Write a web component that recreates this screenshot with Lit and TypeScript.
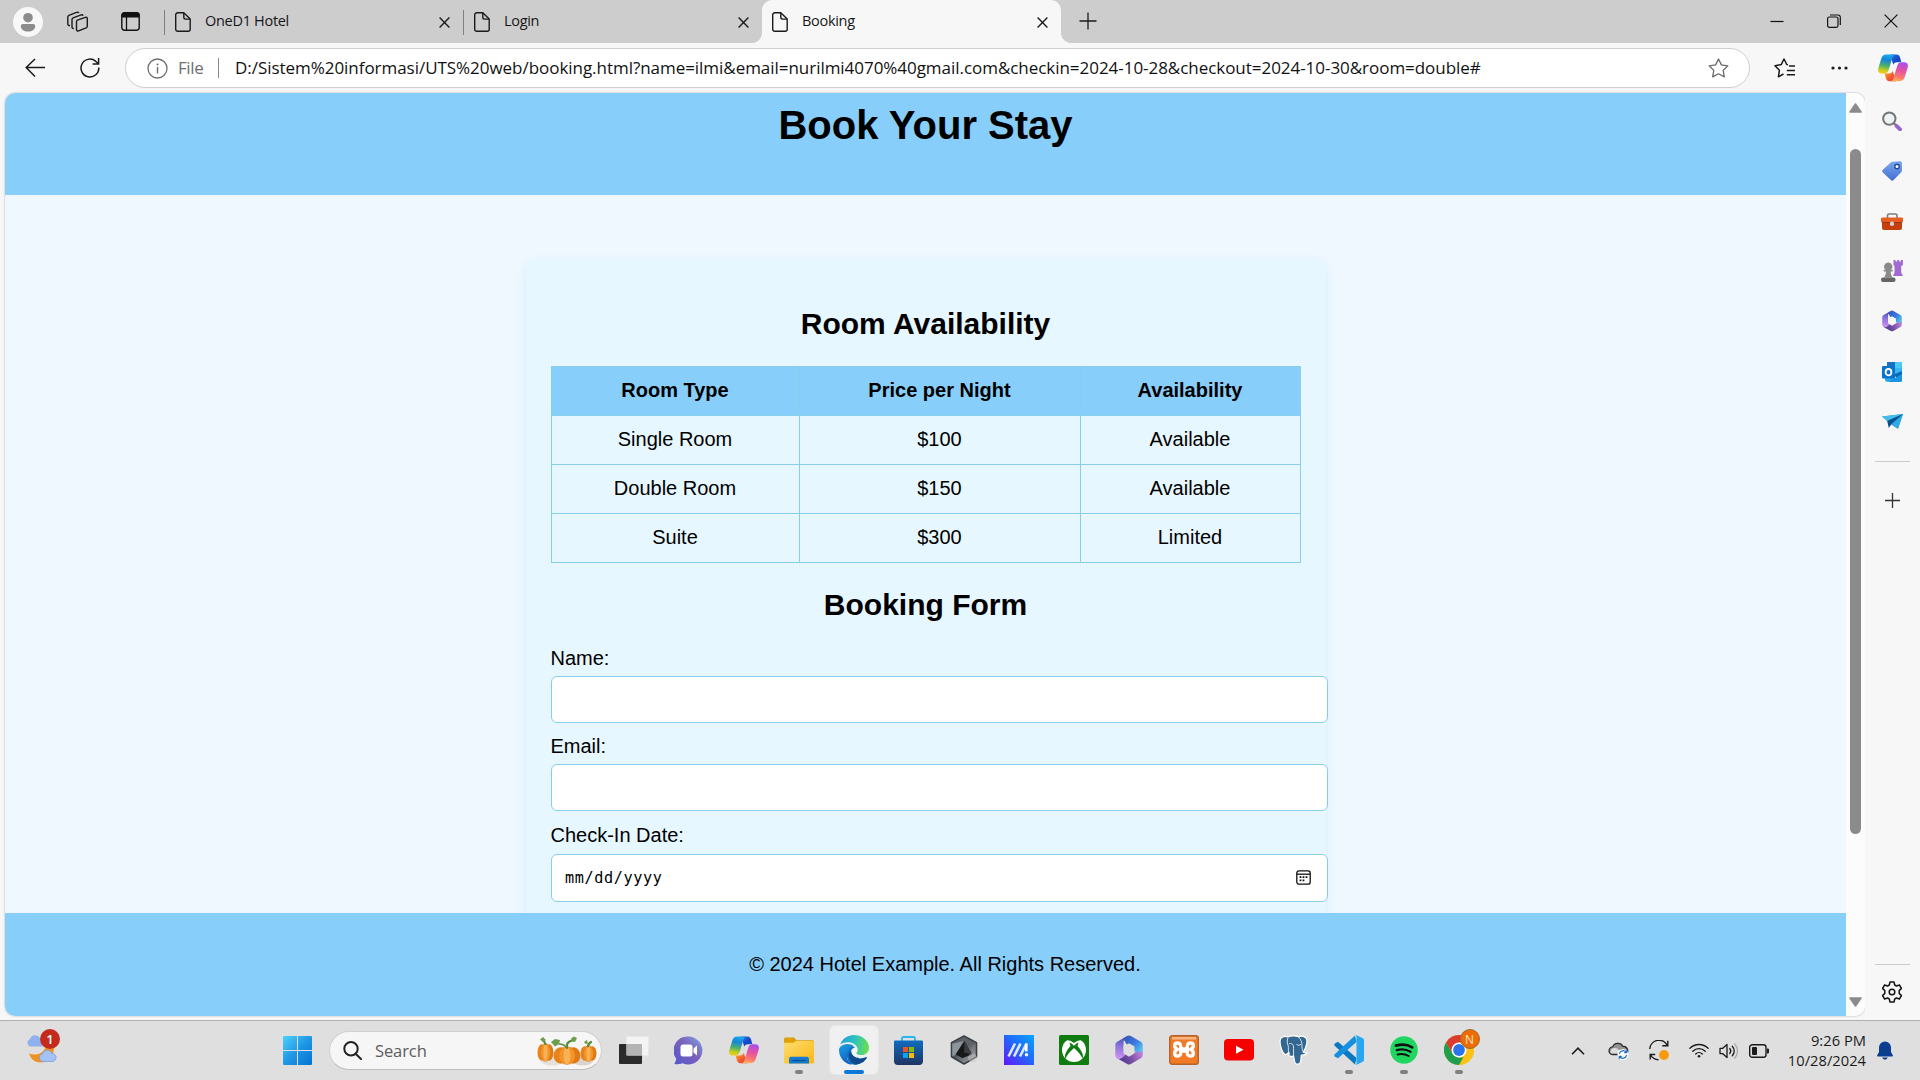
import { LitElement, html, svg, css } from "lit";
import { customElement } from "lit/decorators.js";

/* ---------- shared icon templates, drawn in device pixels ---------- */

const docIcon = html`<svg width="16" height="20" viewBox="0 0 16 20" fill="none" stroke="#1b1b1b" stroke-width="1.4" stroke-linejoin="round">
  <path d="M2.7.8h6.1l6.4 6.3v10.2a2 2 0 0 1-2 2H2.7a2 2 0 0 1-2-2V2.8a2 2 0 0 1 2-2z"/>
  <path d="M8.8 1v4.3a1.8 1.8 0 0 0 1.8 1.8h4.4"/></svg>`;

const closeIcon = html`<svg width="11" height="11" viewBox="0 0 11 11" stroke="#1b1b1b" stroke-width="1.4"><path d="M.6.6l9.8 9.8M10.4.6L.6 10.4"/></svg>`;

const copilotIcon = html`<svg width="30" height="28" viewBox="0 0 30 28">
  <defs>
    <linearGradient id="cpA" x1="0.5" y1="0" x2="0.35" y2="1"><stop offset="0" stop-color="#1aa8ee"/><stop offset=".3" stop-color="#1686d8"/><stop offset=".6" stop-color="#4db06d"/><stop offset=".85" stop-color="#c9cf1d"/><stop offset="1" stop-color="#f2c80f"/></linearGradient>
    <linearGradient id="cpB" x1="0.6" y1="0" x2="0.4" y2="1"><stop offset="0" stop-color="#a94ff0"/><stop offset=".45" stop-color="#e9529d"/><stop offset=".8" stop-color="#fb7a6d"/><stop offset="1" stop-color="#ffb05c"/></linearGradient>
    <linearGradient id="cpC" x1="0" y1="0" x2="1" y2="1"><stop offset="0" stop-color="#2a7be8"/><stop offset=".6" stop-color="#1544c4"/><stop offset="1" stop-color="#1b6ae0"/></linearGradient>
    <linearGradient id="cpD" x1="0" y1="0" x2="1" y2="1"><stop offset="0" stop-color="#fcae1c"/><stop offset=".6" stop-color="#f2562f"/><stop offset="1" stop-color="#d93a5c"/></linearGradient>
  </defs>
  <path fill="url(#cpC)" d="M12 .4h6.600c2.200 0 3 1.300 3.600 3.500l1.200 4.300h-4.600c-2 0-3 .8-3.500 2.600z"/>
  <path fill="url(#cpD)" d="M18 27.200h-6.600c-2.200 0-3-1.300-3.600-3.500L6.600 19.400h4.600c2 0 3-.8 3.500-2.600z"/>
  <path fill="url(#cpA)" d="M8.400.4h8.400c-1.400.6-2 1.900-2.500 3.700l-3.400 11.200c-.8 2.600-1.800 4.100-4.600 4.100H4C.6 19.400-.5 17.200.3 14.200L3.300 4.500C4.200 1.700 5.400.4 8.400.4z"/>
  <path fill="url(#cpB)" d="M21.600 27.200h-8.400c1.400-.6 2-1.900 2.500-3.700l3.400-11.200c.8-2.600 1.800-4.100 4.600-4.100H26c3.400 0 4.500 2.200 3.700 5.200l-3 9.700c-.9 2.800-2.100 4.100-5.100 4.100z"/>
</svg>`;

const m365 = (w: number, h: number) => html`<svg width=${w} height=${h} viewBox="0 0 28 30">
  <defs>
    <linearGradient id="mA" x1=".5" y1="0" x2=".4" y2="1"><stop offset="0" stop-color="#3a4cae"/><stop offset=".45" stop-color="#8a72d8"/><stop offset="1" stop-color="#cf92f2"/></linearGradient>
    <linearGradient id="mB" x1="0" y1="0" x2="1" y2=".9"><stop offset="0" stop-color="#3350b0"/><stop offset=".5" stop-color="#3b78de"/><stop offset="1" stop-color="#5cdcf8"/></linearGradient>
    <linearGradient id="mC" x1="0" y1=".6" x2="1" y2=".3"><stop offset="0" stop-color="#44388e"/><stop offset=".5" stop-color="#7a4fa4"/><stop offset="1" stop-color="#bf85dc"/></linearGradient>
    <mask id="mHole"><rect width="28" height="30" fill="#fff"/><path d="M14 9.200l4.800 2.800v5.800L14 20.800l-4.800-3V12z" fill="#000" stroke="#000" stroke-width="1.500" stroke-linejoin="round"/></mask>
  </defs>
  <g mask="url(#mHole)">
    <path fill="url(#mB)" d="M8 3.500L12.200 1c1.200-.7 2.400-.7 3.600 0l10 5.700c1.200.7 1.900 1.900 1.900 3.300v11L14 13z"/>
    <path fill="url(#mC)" d="M27.700 16v4c0 1.400-.7 2.600-1.900 3.300L15.800 29c-1.200.7-2.400.7-3.600 0l-10-5.700L14 15l5.500 2.500z"/>
    <path fill="url(#mA)" d="M13 .6L2.200 6.700A3.800 3.800 0 0 0 .3 10v10c0 1.700.9 2.900 2 3.400 1.600.8 3.200.6 4.700-.3l4.500-4L8.500 14V8c0-3 1.500-5.700 4.500-7.400z"/>
  </g>
</svg>`;

/* ---------- browser chrome ---------- */

@customElement("browser-tabs")
class BrowserTabs extends LitElement {
  static styles = css`
    :host { display: flex; height: 43px; background: #cdcdcd; font: 14.5px/20px "Open Sans", "Noto Sans", sans-serif; color: #161616; }
    svg { display: block; flex: none; }
    .lead { width: 164px; display: flex; align-items: center; box-sizing: border-box; padding-left: 13px; }
    .work { margin-left: 24px; }
    .pane { margin-left: 33px; }
    .tab { width: 299px; box-sizing: border-box; display: flex; align-items: center; padding: 1px 13px 0 10px; border-left: 1px solid transparent; height: 43px; }
    .rule { width: 1px; height: 25px; background: #808080; margin: 0 10px 0 -11px; }
    .name { flex: 1; margin-left: 14px; letter-spacing: -0.3px; margin-top: -2px; }
    .active { background: #f7f7f7; border-radius: 10px 10px 0 0; position: relative; padding-left: 9px; }
    .active::before, .active::after { content: ""; position: absolute; bottom: 0; width: 10px; height: 10px; }
    .active::before { left: -11px; background: radial-gradient(circle at 0 0, #cdcdcd 9.6px, #f7f7f7 10.2px); }
    .active::after { right: -10px; background: radial-gradient(circle at 100% 0, #cdcdcd 9.6px, #f7f7f7 10.2px); }
    .plus { margin: 12px 0 0 18px; }
    .window { margin-left: auto; display: flex; gap: 43px; padding: 14px 22px 0 0; }
  `;
  private tabs = [
    { name: "OneD1 Hotel", active: false },
    { name: "Login", active: false },
    { name: "Booking", active: true },
  ];
  render() {
    return html`
      <div class="lead">
        <svg width="30" height="30" viewBox="0 0 30 30"><circle cx="15" cy="15" r="15" fill="#f8f8f8"/><circle cx="15" cy="10.700" r="4.800" fill="#8c8c8c"/><path fill="#8c8c8c" d="M10 17h10a2.200 2.200 0 0 1 2.200 2.200c0 3-3 5.300-7.200 5.300s-7.200-2.300-7.200-5.300A2.200 2.200 0 0 1 10 17z"/></svg>
        <svg class="work" width="21" height="21" viewBox="0 0 21 21" fill="none" stroke="#1b1b1b" stroke-width="1.400" stroke-linejoin="round"><path d="M10.400 9.200l8-2.900c1-.3 1.900.2 1.900 1.300v7.700c0 .7-.4 1.300-1.100 1.600l-7.700 3c-1 .4-2-.2-2-1.300v-7.700c0-.8.200-1.400.9-1.700z"/><path d="M6.800 17.500c-1 .2-1.800-.4-1.800-1.400V8.600c0-.8.400-1.400 1.100-1.700l8-3c1-.3 1.700 0 2 .8"/><path d="M3 14.500c-1.200.2-2.200-.3-2.200-1.400V6c0-.8.400-1.400 1.100-1.700l7.600-3c.9-.4 2-.1 2.300.8"/></svg>
        <svg class="pane" width="19" height="19" viewBox="0 0 19 19"><rect x=".8" y=".8" width="17.400" height="17.400" rx="2.600" fill="none" stroke="#111" stroke-width="1.400"/><path d="M.6 5.500V3A2.500 2.500 0 0 1 3.100.6h12.800A2.500 2.500 0 0 1 18.400 3v2.500z" fill="#111"/><path d="M5.500 5v13" stroke="#111" stroke-width="1.300"/></svg>
      </div>
      ${this.tabs.map(
        (t) => html`<div class="tab ${t.active ? "active" : ""}">
          ${t.active ? "" : html`<div class="rule"></div>`}${docIcon}<span class="name">${t.name}</span>${closeIcon}
        </div>`
      )}
      <svg class="plus" width="18" height="18" viewBox="0 0 18 18" stroke="#1b1b1b" stroke-width="1.300"><path d="M9 .5v17M.5 9h17"/></svg>
      <div class="window">
        <svg width="14" height="14" viewBox="0 0 14 14" stroke="#111" stroke-width="1.200"><path d="M.5 7.500h13"/></svg>
        <svg width="14" height="14" viewBox="0 0 14 14" fill="none" stroke="#111" stroke-width="1.200"><rect x=".6" y="3" width="10.400" height="10.400" rx="1.800"/><path d="M3 1h8a2.300 2.300 0 0 1 2.300 2.300V11"/></svg>
        <svg width="14" height="14" viewBox="0 0 14 14" stroke="#111" stroke-width="1.200"><path d="M.6.6l12.800 12.800M13.400.6L.6 13.400"/></svg>
      </div>`;
  }
}

@customElement("address-row")
class AddressRow extends LitElement {
  static styles = css`
    :host { display: flex; height: 50px; background: #f7f7f7; align-items: center; padding-left: 25px; box-sizing: border-box; font: 17px/24px "Open Sans", "Noto Sans", sans-serif; }
    svg { display: block; flex: none; }
    .reload { margin-left: 35px; }
    .bar { margin-left: 25px; width: 1625px; height: 40px; box-sizing: border-box; border: 1px solid #cfcfcf; border-radius: 20px; background: #fff; display: flex; align-items: center; padding: 0 20px 0 21px; }
    .file { margin-left: 10px; width: 26px; color: #6e6e6e; letter-spacing: -0.4px; white-space: nowrap; }
    .rule { width: 1px; height: 20px; background: #8a8a8a; margin: 0 16px 0 14px; }
    .url { flex: 1; color: #111; letter-spacing: -0.04px; white-space: nowrap; margin-top: -1px; }
    .fav { margin-left: 24px; }
    .dots { margin-left: 36px; }
    .copilot { margin-left: 30px; }
  `;
  render() {
    return html`
      <svg width="20" height="20" viewBox="0 0 20 20" fill="none" stroke="#1b1b1b" stroke-width="1.500"><path d="M10 1L1.200 9.500 10 18.500M1.200 9.500H20"/></svg>
      <svg class="reload" width="20" height="22" viewBox="0 0 20 22" fill="none" stroke="#1b1b1b" stroke-width="1.500"><path d="M18.800 10.500A8.900 8.900 0 1 1 15.600 4.200l2.800 2.500M18.600 1v6h-6"/></svg>
      <div class="bar">
        <svg width="21" height="21" viewBox="0 0 21 21"><circle cx="10.500" cy="10.500" r="9.500" fill="none" stroke="#6e6e6e" stroke-width="1.300"/><circle cx="10.500" cy="6.400" r="1" fill="#6e6e6e"/><path d="M10.500 9v6.500" stroke="#6e6e6e" stroke-width="1.400"/></svg>
        <span class="file">File</span><div class="rule"></div>
        <span class="url">D:/Sistem%20informasi/UTS%20web/booking.html?name=ilmi&amp;email=nurilmi4070%40gmail.com&amp;checkin=2024-10-28&amp;checkout=2024-10-30&amp;room=double#</span>
        <svg width="21" height="20" viewBox="0 0 21 20" fill="none" stroke="#6a6a6a" stroke-width="1.300" stroke-linejoin="round"><path d="M10.500 1l2.900 5.900 6.400.9-4.600 4.600 1.100 6.500-5.800-3.100-5.800 3.100 1.100-6.500L1.200 7.800l6.400-.9z"/></svg>
      </div>
      <svg class="fav" width="21" height="20" viewBox="0 0 21 20" fill="none" stroke="#1b1b1b" stroke-width="1.500" stroke-linejoin="round"><path d="M14 6.700l-1.200-.2L10 1 7.200 6.600 1 7.700l4.400 4.600-1 6.500L9.500 16M15 8h6M12.800 12.400H21M12.800 16.800H21"/></svg>
      <svg class="dots" width="17" height="4" viewBox="0 0 17 4" fill="#1b1b1b"><circle cx="2" cy="2" r="1.600"/><circle cx="8.500" cy="2" r="1.600"/><circle cx="15" cy="2" r="1.600"/></svg>
      <div class="copilot">${copilotIcon}</div>`;
  }
}

@customElement("side-rail")
class SideRail extends LitElement {
  static styles = css`
    :host { display: flex; flex-direction: column; align-items: center; width: 55px; background: #f7f7f7; box-sizing: border-box; padding: 3px 1px 2px 0; }
    svg { display: block; }
    .cell { height: 50.1px; width: 55px; display: grid; place-items: center; }
    .rule { width: 35px; height: 1px; background: #cbcbcb; margin-top: 14px; }
    .plus { margin-top: 31px; }
    .gear { height: 53px; display: grid; place-items: center; }
    .spacer { flex: 1; }
  `;
  render() {
    const icons = [
      html`<svg width="20" height="20" viewBox="0 0 20 20"><circle cx="7.300" cy="7.600" r="6.200" fill="#edf2f4" stroke="#767676" stroke-width="2"/><path d="M11.700 12l3 3" stroke="#767676" stroke-width="2.200"/><path d="M14.500 14.800l3.600 3.500" stroke="#9a63cf" stroke-width="3.800" stroke-linecap="round"/></svg>`,
      html`<svg width="20" height="20" viewBox="0 0 20 20"><defs><linearGradient id="tg" x1="0" y1="0" x2="0" y2="1"><stop offset="0" stop-color="#7ba7f0"/><stop offset="1" stop-color="#426fd0"/></linearGradient></defs><path fill="url(#tg)" d="M10.500.8L18 .2c1.200 0 2 .8 2 2v7c0 .8-.3 1.400-.8 2l-7.600 7.900c-.8.900-1.800.9-2.700 0L.8 11.500c-.8-.9-.8-1.900 0-2.700l8-7.300c.5-.4 1-.7 1.700-.7z"/><circle cx="15" cy="5.500" r="2.200" fill="#fff" stroke="#254b91" stroke-width="1.400"/></svg>`,
      html`<svg width="22" height="17" viewBox="0 0 22 17"><path d="M6.500 5V2.500A1.500 1.500 0 0 1 8 1h6.500A1.500 1.500 0 0 1 16 2.500V5" fill="none" stroke="#7c7c7c" stroke-width="1.600"/><path fill="#c53e10" d="M1 8h20v7a2 2 0 0 1-2 2H3a2 2 0 0 1-2-2z"/><rect y="4.500" width="22" height="5" rx="1.300" fill="#ea5d22"/><rect x="1" y="9" width="20" height="1" fill="#9d3311"/><rect x="9" y="8.500" width="4" height="4.500" rx="1.800" fill="#d2d2d2"/></svg>`,
      html`<svg width="22" height="22" viewBox="0 0 22 22"><path fill="#a269d2" d="M12.500 0h2v1.600h1.700V0h2v1.600h1.700V0h2v5l-1.700 1v6.500l1.800 3.500H12l1.500-3.500V6l-1-1z"/><path fill="#8a8a8a" d="M7.300 2.500a4 4 0 0 1 2.500 7.200h2v1.900H9.600c.2 2.500.8 4.400 2 5.800H3c1.200-1.400 1.900-3.300 2-5.800H2.700V9.700h2A4 4 0 0 1 7.300 2.500z"/><rect y="17.400" width="14.500" height="4.500" rx="2" fill="#666"/></svg>`,
      m365(20, 22),
      html`<svg width="20" height="20" viewBox="0 0 20 20"><rect x="5" y="0" width="15" height="14" rx="1.300" fill="#36b8ee"/><path fill="#1b71c0" d="M5 0h8v10H5z"/><path fill="#4cc9f5" d="M13 0h5.700A1.300 1.300 0 0 1 20 1.300V6h-7z"/><path fill="#0b65b8" d="M20 9v10l-9-6z"/><path fill="#26a9e8" d="M3 12l16.500 7.800H5a2 2 0 0 1-2-2z"/><path fill="#1a94e0" d="M20 12v6.500a1.500 1.500 0 0 1-1.500 1.500H6z"/><rect y="4" width="13" height="12.500" rx="1.300" fill="#0a72ca"/><ellipse cx="6.500" cy="10.200" rx="2.900" ry="3.200" fill="none" stroke="#fff" stroke-width="1.800"/></svg>`,
      html`<svg width="21" height="15" viewBox="0 0 21 15"><path fill="#1b93d8" d="M0 2.500L21 0l-5 14.800-6.300-4z"/><path fill="#44bdec" d="M0 2.500L21 0 5.200 7z"/><path fill="#0a4f8e" d="M5.200 7L21 0 9.200 10.500 6.800 14z"/><path fill="#2fa9e6" d="M9.200 10.500L21 0l-5 14.800z"/></svg>`,
    ];
    return html`
      ${icons.map((i) => html`<div class="cell">${i}</div>`)}
      <div class="rule"></div>
      <svg class="plus" width="15" height="15" viewBox="0 0 15 15" stroke="#333" stroke-width="1.300"><path d="M7.500 0v15M0 7.500h15"/></svg>
      <div class="spacer"></div>
      <div class="rule"></div>
      <div class="gear"><svg width="22" height="22" viewBox="0 0 22 22" fill="none" stroke="#161616" stroke-width="1.500" stroke-linejoin="round"><path d="M9 1h4l.7 3 1.700 1 3-1 2 3.400-2.200 2.200v2.800l2.200 2.200-2 3.400-3-1-1.700 1-.7 3H9l-.7-3-1.700-1-3 1-2-3.400 2.200-2.200V9.600L1.600 7.400l2-3.400 3 1 1.700-1z"/><circle cx="11" cy="11" r="2.800"/></svg></div>`;
  }
}

@customElement("scroll-track")
class ScrollTrack extends LitElement {
  static styles = css`
    :host { display: flex; flex-direction: column; align-items: center; width: 19px; background: #fcfcfc; box-sizing: border-box; padding: 10px 0 9px; }
    svg { display: block; }
    .thumb { width: 11px; height: 685px; border-radius: 6px; background: #8b8b8b; margin: 36px 0 auto; }
  `;
  render() {
    return html`
      <svg width="13" height="10" viewBox="0 0 13 10"><path d="M6.500 1L12 9H1z" fill="#8b8b8b" stroke="#8b8b8b" stroke-width="1.600" stroke-linejoin="round"/></svg>
      <div class="thumb"></div>
      <svg width="13" height="10" viewBox="0 0 13 10"><path d="M6.500 9L12 1H1z" fill="#8b8b8b" stroke="#8b8b8b" stroke-width="1.600" stroke-linejoin="round"/></svg>`;
  }
}

/* ---------- the hotel page ---------- */

@customElement("booking-page")
class BookingPage extends LitElement {
  static styles = css`
    :host { display: flex; flex-direction: column; background: #f0f8ff; font: 20px/23px "Liberation Sans", Arial, sans-serif; color: #000; }
    .head { height: 102px; background: #87cefa; text-align: center; }
    h1 { margin: 0; font-size: 40px; line-height: 46px; padding-top: 9px; }
    .body { flex: 1; min-height: 0; overflow: hidden; padding-top: 62.500px; }
    .card { width: 750px; height: 700px; margin: 0 auto; padding: 48px 25px 0; background: #e6f7ff; border-radius: 10px; box-shadow: 0 5px 12.500px rgba(120, 190, 255, 0.2); }
    h2 { margin: 0 0 25px; font-size: 30px; line-height: 35px; text-align: center; }
    table { width: 750px; border-collapse: collapse; table-layout: fixed; margin-bottom: 24px; }
    th, td { border: 1px solid #87ceeb; height: 48px; padding: 0; text-align: center; line-height: 23px; }
    th { background: #87cefa; }
    .c1 { width: 247px; } .c2 { width: 280px; }
    .label { display: block; margin-bottom: 6px; }
    .input { box-sizing: border-box; width: 777px; height: 47px; border: 1px solid #87ceeb; border-radius: 6px; background: #fff; margin-bottom: 12.500px; display: flex; align-items: center; justify-content: space-between; padding: 0 16px 0 13.500px; font: 15.200px/20px "DejaVu Sans Mono", "Liberation Mono", monospace; letter-spacing: 0.6px; }
    .date { height: 48px; margin-top: 7px; }
    .foot { height: 103px; background: #87cefa; display: grid; place-items: center; padding-left: 39px; }
  `;
  private rooms = [
    ["Single Room", "$100", "Available"],
    ["Double Room", "$150", "Available"],
    ["Suite", "$300", "Limited"],
  ];
  render() {
    return html`
      <header class="head"><h1>Book Your Stay</h1></header>
      <div class="body"><section class="card">
        <h2>Room Availability</h2>
        <table>
          <tr><th class="c1">Room Type</th><th class="c2">Price per Night</th><th>Availability</th></tr>
          ${this.rooms.map((r) => html`<tr>${r.map((c) => html`<td>${c}</td>`)}</tr>`)}
        </table>
        <h2>Booking Form</h2>
        <span class="label">Name:</span><div class="input"></div>
        <span class="label">Email:</span><div class="input"></div>
        <span class="label">Check-In Date:</span>
        <div class="input date"><span>mm/dd/yyyy</span>
          <svg width="15" height="15" viewBox="0 0 15 15"><rect x=".8" y=".8" width="13.400" height="13.400" rx="2.200" fill="none" stroke="#111" stroke-width="1.300"/><path d="M1 4.200h13" stroke="#111" stroke-width="1.300"/><path fill="#111" d="M3.600 6.300h1.800v1.800H3.600zM6.600 6.300h1.800v1.800H6.600zM9.600 6.300h1.800v1.800H9.600zM3.600 9.500h1.800v1.800H3.600zM6.600 9.500h1.800v1.800H6.600z"/></svg>
        </div>
      </section></div>
      <footer class="foot"><span>© 2024 Hotel Example. All Rights Reserved.</span></footer>`;
  }
}

/* ---------- taskbar ---------- */

const taskIcons = {
  view: html`<svg width="30" height="28" viewBox="0 0 30 28"><rect y="8" width="23" height="20" rx="1" fill="#2b2b2b"/><rect x="7.500" y=".5" width="22" height="19" rx="1" fill="#f6f6f6" opacity=".9"/><path d="M7.500 8H23v11.500H7.500z" fill="#b4b4b4"/></svg>`,
  chat: html`<svg width="29" height="29" viewBox="0 0 29 29"><defs><linearGradient id="ch" x1="1" y1="0" x2="0" y2="1"><stop offset="0" stop-color="#7fa3ea"/><stop offset=".45" stop-color="#7a62b8"/><stop offset="1" stop-color="#5257cf"/></linearGradient></defs><path fill="url(#ch)" d="M14.500.5a14 14 0 1 1-5.800 26.800c-2.600.8-5.200 1.200-8.400.7 1-1.500 1.600-3.300 2-5.200A14 14 0 0 1 14.500.5z"/><rect x="6.500" y="8.500" width="12" height="12" rx="2.500" fill="#fff"/><path fill="#fff" d="M19.500 12.500l3.500-3v10l-3.500-3z"/></svg>`,
  explorer: html`<svg width="30" height="27" viewBox="0 0 30 27"><defs><linearGradient id="ex" x1="0" y1="0" x2="1" y2="1"><stop offset="0" stop-color="#fddc70"/><stop offset="1" stop-color="#fbb813"/></linearGradient></defs><path fill="#dda006" d="M0 2a1.500 1.500 0 0 1 1.500-1.500H10l2.500 2.700h16A1.500 1.500 0 0 1 30 4.700V8H0z"/><path fill="url(#ex)" d="M0 5.800h9.500L12 4h16.500A1.500 1.500 0 0 1 30 5.500V25a1.500 1.500 0 0 1-1.500 1.500h-27A1.500 1.500 0 0 1 0 25z"/><path fill="#1579cd" d="M5 26.500v-4.800a2 2 0 0 1 2-2h16a2 2 0 0 1 2 2v4.800z"/><path d="M8.500 23.500h13" stroke="#0a4f94" stroke-width="1.200"/></svg>`,
  edge: html`<svg width="30" height="30" viewBox="0 0 24 24"><defs><linearGradient id="e1" x1="0" y1=".4" x2="1" y2=".5"><stop offset="0" stop-color="#1f9fdc"/><stop offset=".45" stop-color="#2bc0c6"/><stop offset="1" stop-color="#6ae04a"/></linearGradient><linearGradient id="e2" x1="0" y1="0" x2=".4" y2="1"><stop offset="0" stop-color="#1c9fe4"/><stop offset="1" stop-color="#0f63c0"/></linearGradient></defs><path fill="#0f6fca" d="M5 13L8 8.500l4.500 1-1 5.500 5 4 6-1.500-3 4-6 2.400-5.500-1z"/><path fill="#f2f4f6" d="M9.800 12.200c.8-1.700 2.600-2.700 4.100-1.700 1 .8 1 2.300.2 3.600l-.6 1 1.500 3.300c-3.400-.6-5.200-3-5.200-6.200z"/><path fill="#114a8b" d="M21.860 17.860q.14 0 .25.120.1.130.1.250t-.11.330l-.32.460-.43.530-.44.500q-.26.250-.38.370l-.22.230q-.58.530-1.340 1.040-.76.510-1.600.910-.86.400-1.740.640t-1.670.240q-.9 0-1.690-.28-.8-.28-1.480-.78-.68-.5-1.220-1.170-.53-.66-.92-1.440-.38-.77-.58-1.600-.2-.83-.2-1.670 0-1 .32-1.960.33-.97.870-1.800.14.950.550 1.770.41.820 1.020 1.500.6.680 1.380 1.210.78.540 1.640.9.860.360 1.770.560.920.2 1.800.2 1.120 0 2.180-.24 1.060-.23 2.060-.72l.2-.1.2-.05z"/><path fill="url(#e2)" d="M6.360 16.590q0 1.100.27 2.150.27 1.060.78 2.030.51.960 1.240 1.770.74.820 1.660 1.400-1.470-.2-2.800-.74-1.330-.55-2.480-1.370-1.150-.83-2.080-1.900-.92-1.070-1.580-2.330T.36 14.940Q0 13.540 0 12.060q0-.81.320-1.490.31-.68.830-1.230.53-.55 1.200-.96.660-.4 1.350-.66.740-.27 1.500-.39.780-.12 1.550-.12.700 0 1.420.100.720.120 1.400.350.680.230 1.320.570.630.350 1.160.830-.35 0-.7.070-.33.070-.65.230-.63.280-1.200.740-.57.460-1.050 1.040-.48.580-.87 1.260-.38.670-.65 1.390-.27.710-.42 1.440-.15.720-.15 1.380z"/><path fill="url(#e1)" d="M11.960.06q1.700 0 3.330.39 1.630.38 3.070 1.150 1.430.77 2.620 1.930 1.180 1.160 1.980 2.700.49.940.76 1.960.28 1 .28 2.080 0 .89-.23 1.700-.24.800-.69 1.480-.45.680-1.100 1.220-.64.530-1.450.88-.54.240-1.110.36-.58.130-1.160.13-.42 0-.97-.03-.54-.03-1.100-.12-.55-.1-1.050-.28-.5-.19-.84-.5-.12-.09-.23-.24-.1-.16-.1-.33 0-.15.160-.35.160-.2.350-.5.200-.28.360-.68.160-.4.160-.95 0-1.060-.4-1.960-.4-.91-1.060-1.640-.66-.74-1.520-1.280-.86-.55-1.790-.89-.84-.3-1.720-.44-.87-.14-1.760-.14-1.550 0-3.060.45T.94 7.550q.71-1.740 1.810-3.130 1.100-1.380 2.520-2.350Q6.680 1.100 8.370.58q1.700-.52 3.580-.52Z"/></svg>`,
  store: html`<svg width="29" height="29" viewBox="0 0 29 29"><defs><linearGradient id="st" x1="0" y1="0" x2="0" y2="1"><stop offset="0" stop-color="#0f6cc0"/><stop offset="1" stop-color="#1f3463"/></linearGradient></defs><path d="M8 6V2.500A1.500 1.500 0 0 1 9.500 1h10A1.500 1.500 0 0 1 21 2.500V6" fill="none" stroke="#25b7ec" stroke-width="1.800"/><path fill="url(#st)" d="M0 5.500A1 1 0 0 1 1 4.500h27a1 1 0 0 1 1 1V25a4 4 0 0 1-4 4H4a4 4 0 0 1-4-4z"/><path fill="#f0502a" d="M9 11h5v5H9z"/><path fill="#80bb0a" d="M15 11h5v5h-5z"/><path fill="#08a4ee" d="M9 17h5v5H9z"/><path fill="#fdb90b" d="M15 17h5v5h-5z"/></svg>`,
  cube: html`<svg width="28" height="30" viewBox="0 0 28 30"><defs><linearGradient id="cu" x1="0" y1="0" x2="1" y2="1"><stop offset="0" stop-color="#9aa2aa"/><stop offset=".4" stop-color="#4a4f55"/><stop offset="1" stop-color="#b4b8bc"/></linearGradient></defs><path fill="url(#cu)" stroke="#3b3e42" stroke-width="1.600" stroke-linejoin="round" d="M14 1l12.500 6.800v14L14 29 1.500 21.800v-14z"/><path fill="#5d6268" d="M2.500 8.500L14 13 26 8.500 14 2z"/><path fill="#8d959d" d="M2.300 9L13.500 6 6 19.500l-3.700 2z"/><path fill="#17181a" d="M14.500 6l7.500 13.500-9.500 3.500-7-3.500z"/><path fill="#3a3c3f" d="M14.500 6L22 19.500l-8-2z"/><circle cx="22.500" cy="23" r="4.500" fill="#c9c9c9" opacity=".45"/></svg>`,
  ma: html`<svg width="30" height="30" viewBox="0 0 30 30"><defs><linearGradient id="ma" x1="1" y1="0" x2="0" y2="1"><stop offset="0" stop-color="#0aa5fb"/><stop offset=".45" stop-color="#1e6dfb"/><stop offset="1" stop-color="#6216fb"/></linearGradient></defs><path fill="url(#ma)" d="M0 0h30v30H0z"/><path d="M4.500 21.500L11 8.500M10 21.500l6.500-13M16 21.500l6.500-13" fill="none" stroke="#dce8ff" stroke-width="2.600"/><path d="M22.300 8.500v8" stroke="#fff" stroke-width="2.600"/><circle cx="22.500" cy="19.800" r="1.700" fill="#fff"/></svg>`,
  xbox: html`<svg width="30" height="30" viewBox="0 0 30 30"><rect width="30" height="30" rx="1.500" fill="#107c10"/><circle cx="15" cy="15" r="12" fill="#fff"/><path fill="#107c10" d="M6.300 5.500C9.500 4.600 12.500 6 15 8c2.500-2 5.500-3.400 8.700-2.500l.6-2.500H5.700z"/><path fill="#107c10" d="M10.500 7.500C12 8 13.500 9.300 15 10.700 16.500 9.300 18 8 19.500 7.500l-1 3.500c3.500 3.700 6.500 9 5.200 12.800C22 20 18.500 16 15 13 11.500 16 8 20 6.300 23.800 5 20 8 14.700 11.500 11z"/></svg>`,
  m365: m365(28, 30),
  xampp: html`<svg width="30" height="30" viewBox="0 0 30 30"><rect x=".7" y=".7" width="28.600" height="28.600" rx="2.500" fill="#f07a26" stroke="#b5652c" stroke-width="1.400"/><path fill="#f9b583" d="M3 2h24v2.500H3z"/><g fill="none" stroke="#fff" stroke-width="3.300" stroke-linejoin="round" stroke-linecap="round"><path d="M8.500 14.500C4.500 12.500 5 8 8.500 8c3.500 0 3.500 3.500 3 6h7c-.5-2.500-.5-6 3-6s4 4.500 0 6.500c4 1.500 3.500 6.500 0 6.500s-3.500-3-3-5h-7c.5 2 .5 5-3 5s-4-5 0-6.500z"/></g></svg>`,
  youtube: html`<svg width="30" height="22" viewBox="0 0 30 22"><rect width="30" height="21.500" rx="4" fill="#f80000"/><path fill="#fff" d="M12 6.800l7.500 4-7.500 4z"/></svg>`,
  postgres: html`<svg width="29" height="30" viewBox="0 0 29 30"><path fill="#336791" stroke="#fff" stroke-width="1.200" stroke-linejoin="round" d="M9 2C5 .3 1 2.300 1 6.500 1 11 3.500 19 6.500 19.500c1.500.2 2-.8 3-1.800l1 .5c-1 1.500-1.500 2.500.5 3 1.500.4 2.600.3 3.500-.5 1 3 .4 7.800 3 8.300 2.400.5 4-.8 4.300-3.500l.5-5.500c2.500.3 5-.8 6-2.200-1.400-.2-3 .4-4-.6C27 13 29.200 5.500 27 3.200 25 1 22 .8 19.500 1.800 17.500.8 11.500.3 9 2z"/><path d="M9 2.800c-1.500 3-.5 6 .2 8 .5 2-.2 4.500.5 7M19.500 2c2 2 3.500 5 3.500 8-.5 2 .5 5 1.200 7M10 9c1.800-1.200 4.500 0 4.500 2.500 0 3 .2 5.500 0 9M17.500 9c1 2 3.500 1.500 4.500.2" fill="none" stroke="#fff" stroke-width=".8"/></svg>`,
  vscode: html`<svg width="30" height="30" viewBox="0 0 30 30"><path fill="#0a78c2" d="M22.500 23L4 6.800 1.200 8.200c-1.200.8-1.200 2-.3 2.900L21 29.500z"/><path fill="#1490df" d="M22.500 7L4 23.200l-2.800-1.400c-1.200-.8-1.200-2-.3-2.900L21 .5z"/><path fill="#28a6f2" d="M21 .4c.5-.4 1-.4 1.500-.1l6.300 3c.8.4 1.200 1 1.200 1.900v19.600c0 .9-.4 1.500-1.200 1.900l-6.300 3c-.5.3-1 .3-1.500-.1.800.3 1.500-.2 1.500-1.200V1.600c0-1-.7-1.500-1.500-1.200z"/></svg>`,
  spotify: html`<svg width="28" height="28" viewBox="0 0 28 28"><circle cx="14" cy="14" r="13.800" fill="#1fd660"/><g fill="none" stroke="#111" stroke-linecap="round"><path d="M6 9.600c5.500-1.600 11.500-1.100 16.200 1.700" stroke-width="2.700"/><path d="M6.800 14.200c4.700-1.300 9.600-.8 13.700 1.600" stroke-width="2.300"/><path d="M7.500 18.500c4-.9 7.800-.5 11.200 1.500" stroke-width="1.900"/></g></svg>`,
  chrome: html`<svg width="30" height="30" viewBox="0 0 30 30"><circle cx="15" cy="15" r="15" fill="#fbc116"/><path fill="#dd3b30" d="M15 0a15 15 0 0 1 13 7.500H15L8.500 18.800 2 7.500A15 15 0 0 1 15 0z"/><path fill="#1f9f4d" d="M2 7.500l6.500 11.300L15 22.500h6.500L15 30A15 15 0 0 1 2 7.500z"/><path fill="#fbc116" d="M28 7.500A15 15 0 0 1 15 30l6.500-11.300V7.500z"/><circle cx="15" cy="15" r="7.500" fill="#fff"/><circle cx="15" cy="15" r="5.900" fill="#2b73e8"/></svg>`,
};

@customElement("task-bar")
class TaskBar extends LitElement {
  static styles = css`
    :host { display: flex; height: 60px; box-sizing: border-box; border-top: 1px solid #b0b0b4; background: #dfdfdf; font: 15px/20px "Open Sans", "Noto Sans", sans-serif; color: #1b1b1b; }
    svg { display: block; flex: none; }
    .weather { position: relative; margin: 14px 0 0 26px; width: 36px; height: 36px; }
    .badge { position: absolute; display: grid; place-items: center; border-radius: 50%; color: #fff; }
    .one { left: 14px; top: -6px; width: 20px; height: 20px; background: #c42b1c; font-size: 13px; font-weight: 600; }
    .start { margin: 15px 0 0 221px; }
    .search { margin: 10px 4px 0 17px; width: 273px; height: 39px; box-sizing: border-box; border: 1px solid #d0d0d0; border-bottom-color: #bdbdbd; border-radius: 20px; background: #f6f6f6; display: flex; align-items: center; padding: 0 4px 0 13px; font-size: 16.500px; color: #5c5c5c; }
    .search span { flex: 1; margin-left: 13px; letter-spacing: -0.1px; }
    .app { width: 55px; display: flex; justify-content: center; }
    .tile { position: relative; width: 48px; height: 48px; margin-top: 5px; display: grid; place-items: center; border-radius: 5px; }
    .on { background: #f0f0f0; box-shadow: 0 0 0 1px #e7e7e7; }
    .mark { position: absolute; left: 20px; bottom: 0; width: 8px; height: 4px; border-radius: 2px; background: #808080; }
    .on .mark { left: 14px; width: 20px; background: #0f78d4; }
    .n { left: 25px; top: 3px; width: 18px; height: 18px; background: #ee6c00; border: 1px solid #9b6a36; font-size: 12px; color: #fce3c8; }
    .tray { margin-left: auto; display: flex; align-items: center; height: 59px; padding-right: 27px; }
    .cloud { margin-left: 23px; } .sync { margin-left: 20px; } .wifi { margin-left: 20px; } .sound { margin-left: 10px; } .power { margin-left: 10px; }
    .clock { width: 97px; text-align: right; font-size: 14.700px; letter-spacing: 0.02px; margin-top: -1px; }
    .bell { margin-left: 11px; }
  `;
  private apps: { icon: unknown; open?: boolean; active?: boolean; badge?: string }[] = [
    { icon: taskIcons.view },
    { icon: taskIcons.chat },
    { icon: copilotIcon },
    { icon: taskIcons.explorer, open: true },
    { icon: taskIcons.edge, open: true, active: true },
    { icon: taskIcons.store },
    { icon: taskIcons.cube },
    { icon: taskIcons.ma },
    { icon: taskIcons.xbox },
    { icon: taskIcons.m365 },
    { icon: taskIcons.xampp },
    { icon: taskIcons.youtube },
    { icon: taskIcons.postgres },
    { icon: taskIcons.vscode, open: true },
    { icon: taskIcons.spotify, open: true },
    { icon: taskIcons.chrome, open: true, badge: "N" },
  ];
  private pumpkin(x: number, y: number, rx: number, ry: number) {
    return svg`<ellipse cx=${x - rx * 0.45} cy=${y} rx=${rx * 0.55} ry=${ry * 0.92} fill="#e8831c"/>
      <ellipse cx=${x + rx * 0.45} cy=${y} rx=${rx * 0.55} ry=${ry * 0.92} fill="#e07a16"/>
      <ellipse cx=${x} cy=${y} rx=${rx * 0.62} ry=${ry} fill="#f3952a" stroke="#d9791a" stroke-width=".5"/>
      <ellipse cx=${x} cy=${y} rx=${rx * 0.25} ry=${ry} fill="#fbb255"/>`;
  }
  render() {
    return html`
      <div class="weather">
        <svg width="32" height="32" viewBox="0 0 32 32"><path fill="#8fb2ef" d="M4 11.500a4 4 0 0 1 0-7.500A5.500 5.500 0 0 1 14 3l3 8.500z"/><path fill="#f0931e" d="M28 10c.5 9-2.500 17.500-13.500 17.500-6 0-10-4-11.500-9 6 2.500 15 1 17-8z"/><path fill="#a3c2f7" stroke="#7898d8" stroke-width=".7" d="M16.500 26.500a3.800 3.800 0 0 1 0-7.500c1-5 8-5 9.500-.5 5.500 0 5.500 8 0 8z"/></svg>
        <span class="badge one">1</span>
      </div>
      <svg class="start" width="29" height="29" viewBox="0 0 29 29"><defs><linearGradient id="wn" x1="0" y1="0" x2="1" y2="1"><stop offset="0" stop-color="#4fd2fb"/><stop offset=".5" stop-color="#1f97e4"/><stop offset="1" stop-color="#0473d2"/></linearGradient></defs><path fill="url(#wn)" d="M1 0h13v14H0V1a1 1 0 0 1 1-1zM15 0h13a1 1 0 0 1 1 1v13H15zM0 15h14v14H1a1 1 0 0 1-1-1zM15 15h14v13a1 1 0 0 1-1 1H15z"/></svg>
      <div class="search">
        <svg width="19" height="19" viewBox="0 0 19 19" fill="none" stroke="#222" stroke-width="2"><circle cx="8" cy="7.800" r="6.700"/><path d="M12.600 12.800l5.400 5.200" stroke-linecap="round"/></svg>
        <span>Search</span>
        <svg width="60" height="30" viewBox="0 0 60 30">
          <ellipse cx="15" cy="25.500" rx="11" ry="4" fill="#e7e0da"/><ellipse cx="46" cy="25" rx="10" ry="4.500" fill="#dcd3cc"/>
          ${this.pumpkin(8.500, 16.500, 8, 9)}${this.pumpkin(51.500, 17.500, 8, 8)}${this.pumpkin(30, 19.500, 13.500, 9)}
          <g fill="none" stroke="#5b8a3c" stroke-width="2.200" stroke-linecap="round"><path d="M8.500 8L6 3.500M30 12c-1-4.500 1-6.500 5-7.500M51 10.500c0-2 1.500-3.500 3-4.500"/><path d="M29 11c-2-2.500-4-3-7-3" stroke-width="1.300"/></g>
          <path fill="#6d9e4d" d="M14 6l4-3 5 1-1 4-4 2.500zM34 2.500L37 .5l3 1.500-2 4-3-.5zM3 3.500l3-2.500 3 3-3 2zM47 6l3-2 1 3.500-2.500.5z"/></svg>
      </div>
      ${this.apps.map(
        (a) => html`<div class="app"><div class="tile ${a.active ? "on" : ""}">${a.icon}
          ${a.badge ? html`<span class="badge n">${a.badge}</span>` : ""}${a.open ? html`<i class="mark"></i>` : ""}</div></div>`
      )}
      <div class="tray">
        <svg width="14" height="8" viewBox="0 0 14 8" fill="none" stroke="#1b1b1b" stroke-width="1.600"><path d="M1 7.200l6-6 6 6"/></svg>
        <svg class="cloud" width="21" height="18" viewBox="0 0 21 18"><path d="M5 12.500a3.800 3.800 0 0 1-.3-7.600C6 .5 13 0 14.500 4.200c5 0 6.500 5 4 8.300z" fill="#959595" stroke="#2b2b2b" stroke-width="1.300"/><path fill="#dcdcdc" d="M3 11.500c-1.500-3 1-6 4-5.500 3 .5 5 2 7 5.500z"/><circle cx="15" cy="12.500" r="5.500" fill="#fff"/><path d="M11.300 11.800a3.900 3.900 0 0 1 7-1.400M18.700 8.200v2.500h-2.500M18.700 13.200a3.900 3.900 0 0 1-7 1.400M11.300 16.800v-2.500h2.500" fill="none" stroke="#1a6fc4" stroke-width="1.300"/></svg>
        <svg class="sync" width="20" height="21" viewBox="0 0 20 21" fill="none" stroke="#1b1b1b" stroke-width="1.400"><path d="M.8 9A9.200 9.200 0 0 1 18.300 5.500M18.800.8v5h-5.500M1.200 19.500v-5h5M1.500 14.800c1.500 3 4.500 4.800 8 5"/><circle cx="15" cy="15" r="5" fill="#fb9a0a" stroke="none"/></svg>
        <svg class="wifi" width="20" height="15" viewBox="0 0 20 15" fill="none" stroke="#1b1b1b" stroke-width="1.400" stroke-linecap="round"><path d="M.9 5.200a13 13 0 0 1 18.200 0M3.800 8.200a8.800 8.800 0 0 1 12.400 0M6.700 11a4.700 4.700 0 0 1 6.600 0"/><circle cx="10" cy="13.200" r="1.300" fill="#1b1b1b" stroke="none"/></svg>
        <svg class="sound" width="20" height="16" viewBox="0 0 20 16" fill="none" stroke="#1b1b1b" stroke-width="1.300" stroke-linecap="round" stroke-linejoin="round"><path d="M1 5.300h2.800L8 1.500v13l-4.200-3.800H1z"/><path d="M10.800 5.500a4 4 0 0 1 0 5M13.300 3.200a7 7 0 0 1 0 9.600"/><path d="M15.800 1a10.500 10.500 0 0 1 0 14" stroke="#a9a9a9"/></svg>
        <svg class="power" width="20" height="14" viewBox="0 0 20 14"><rect x=".7" y=".7" width="16.300" height="12.600" rx="2.600" fill="none" stroke="#1b1b1b" stroke-width="1.400"/><rect x="3" y="3" width="5" height="8" rx="1" fill="#1b1b1b"/><path d="M18 4.500h.8a1.200 1.200 0 0 1 1.200 1.200v2.600a1.200 1.200 0 0 1-1.200 1.200H18z" fill="#1b1b1b"/></svg>
        <div class="clock">9:26 PM<br />10/28/2024</div>
        <svg class="bell" width="16" height="20" viewBox="0 0 16 20" fill="#0a3f8f"><path d="M8 .5a6 6 0 0 1 6 6V11l1.800 3.200c.3.700 0 1.300-.8 1.300H1c-.8 0-1.100-.6-.8-1.300L2 11V6.500a6 6 0 0 1 6-6zM5.200 16.500h5.600a2.900 2.900 0 0 1-5.600 0z"/></svg>
      </div>`;
  }
}

@customElement("app-root")
class AppRoot extends LitElement {
  static styles = css`
    :host { display: flex; flex-direction: column; width: 1920px; height: 1080px; overflow: hidden; background: #f7f7f7; }
    .middle { flex: 1; min-height: 0; display: flex; padding-left: 5px; }
    .frame { width: 1860px; height: 923px; display: flex; border-radius: 10px; overflow: hidden; box-shadow: 0 0 2px rgba(0, 0, 0, 0.35); }
    .page { width: 1841px; height: 923px; }
  `;
  render() {
    return html`
      <browser-tabs></browser-tabs>
      <address-row></address-row>
      <div class="middle">
        <div class="frame"><booking-page class="page"></booking-page><scroll-track></scroll-track></div>
        <side-rail></side-rail>
      </div>
      <task-bar></task-bar>`;
  }
}
